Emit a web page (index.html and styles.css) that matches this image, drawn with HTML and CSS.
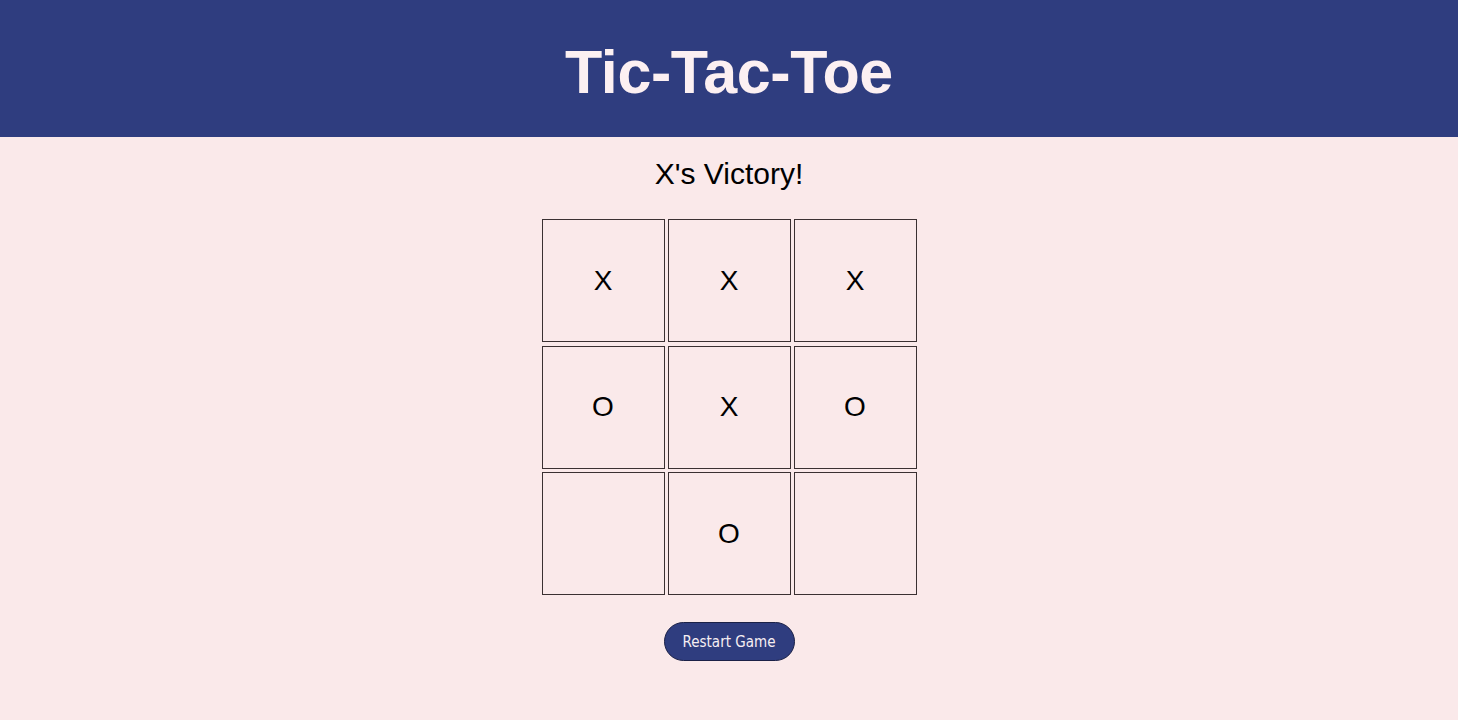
FILE: index.html
```html
<!DOCTYPE html>
<html lang="en">
<head>
<meta charset="utf-8">
<title>Tic-Tac-Toe</title>
<link rel="stylesheet" href="styles.css">
</head>
<body>
<header class="top-bar">
  <h1 class="title">Tic-Tac-Toe</h1>
</header>
<main class="game">
  <p class="status">X's Victory!</p>
  <div class="board">
    <div class="cell">X</div>
    <div class="cell">X</div>
    <div class="cell">X</div>
    <div class="cell">O</div>
    <div class="cell">X</div>
    <div class="cell">O</div>
    <div class="cell"></div>
    <div class="cell">O</div>
    <div class="cell"></div>
  </div>
  <button class="restart">Restart Game</button>
</main>
</body>
</html>
```
FILE: styles.css
```css
html, body {
  margin: 0;
  padding: 0;
}
body {
  background: #fae9ea;
  font-family: "Liberation Sans", Arial, sans-serif;
  color: #000;
  min-height: 720px;
}
.top-bar {
  background: #2f3d7f;
  height: 137px;
  display: flex;
  align-items: center;
  justify-content: center;
}
.title {
  margin: 0;
  font-size: 61px;
  font-weight: 700;
  color: #fcf0f2;
  line-height: 1;
  letter-spacing: -0.4px;
  transform: translateY(4px);
}
.game {
  display: flex;
  flex-direction: column;
  align-items: center;
}
.status {
  margin: 20px 0 0;
  font-size: 30px;
  line-height: 34px;
}
.board {
  margin-top: 28px;
  display: grid;
  grid-template-columns: repeat(3, 123px);
  grid-template-rows: repeat(3, 123px);
  column-gap: 3px;
  row-gap: 3.5px;
}
.cell {
  box-sizing: border-box;
  border: 1px solid #3a3032;
  display: flex;
  align-items: center;
  justify-content: center;
  font-size: 28px;
}
.restart {
  margin-top: 27px;
  width: 131px;
  height: 39px;
  box-sizing: border-box;
  border: 1px solid #1b2147;
  border-radius: 20px;
  background: #2f3d7f;
  color: #f6eef2;
  font-family: "DejaVu Sans Condensed", "DejaVu Sans", sans-serif;
  font-size: 15px;
  padding: 0;
  cursor: pointer;
}
```
